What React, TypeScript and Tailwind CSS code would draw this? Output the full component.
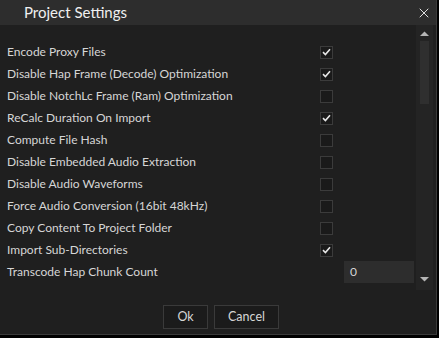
import { X } from "lucide-react";

const ROWS: ReadonlyArray<{ label: string; checked: boolean }> = [
  { label: "Encode Proxy Files", checked: true },
  { label: "Disable Hap Frame (Decode) Optimization", checked: true },
  { label: "Disable NotchLc Frame (Ram) Optimization", checked: false },
  { label: "ReCalc Duration On Import", checked: true },
  { label: "Compute File Hash", checked: false },
  { label: "Disable Embedded Audio Extraction", checked: false },
  { label: "Disable Audio Waveforms", checked: false },
  { label: "Force Audio Conversion (16bit 48kHz)", checked: false },
  { label: "Copy Content To Project Folder", checked: false },
  { label: "Import Sub-Directories", checked: true },
];

function Check({ checked }: { checked: boolean }) {
  return (
    <span className="flex h-[13px] w-[13px] items-center justify-center border border-[#3b3b3b] bg-[#1a1a1a]">
      {checked ? (
        <svg width="9" height="8" viewBox="0 0 9 8" fill="none">
          <path d="M1 4.2 L3.4 6.5 L8 1.2" stroke="#e6e6e6" strokeWidth="1.6" />
        </svg>
      ) : null}
    </span>
  );
}

export default function App() {
  return (
    <div
      className="h-[338px] w-[439px] bg-black"
      style={{ fontFamily: 'Lato, "Noto Sans", sans-serif' }}
    >
      <div className="flex h-[335px] w-[437px] flex-col border-r border-b border-[#3a3a3a] bg-[#1f1f1f]">
        {/* title bar */}
        <div className="flex h-[25px] shrink-0 items-center justify-between bg-[#2d2d2d] pl-[24px] pr-[4px]">
          <span className="text-[15px] leading-none text-[#f0f0f0]">Project Settings</span>
          <X size={16} strokeWidth={1.5} className="text-[#e0e0e0]" />
        </div>

        <div className="flex h-[265px] shrink-0">
          {/* settings list */}
          <div className="flex flex-1 flex-col pt-[16px]">
            {ROWS.map((row) => (
              <div key={row.label} className="flex h-[22px] items-center pl-[7px]">
                <span className="w-[313px] text-[12px] text-[#d6d6d6]">{row.label}</span>
                <Check checked={row.checked} />
              </div>
            ))}
            <div className="flex h-[22px] items-center pl-[7px]">
              <span className="w-[337px] text-[12px] text-[#d6d6d6]">Transcode Hap Chunk Count</span>
              <span className="flex h-[22px] w-[70px] items-center bg-[#2d2d2d] pl-[6px] text-[12px] text-[#d6d6d6]">
                0
              </span>
            </div>
          </div>

          {/* scrollbar */}
          <div className="mr-[3px] flex w-[17px] flex-col items-center bg-[#242424]">
            <svg width="9" height="6" viewBox="0 0 9 6" className="mt-[6px]">
              <path d="M0 5 L4.5 0.5 L9 5 Z" fill="#b5b5b5" />
            </svg>
            <div className="mt-[4px] h-[63px] w-[9px] bg-[#2f2f2f]" />
            <svg width="9" height="6" viewBox="0 0 9 6" className="mt-auto mb-[8px]">
              <path d="M0 1 L4.5 5.5 L9 1 Z" fill="#b5b5b5" />
            </svg>
          </div>
        </div>

        {/* buttons */}
        <div className="flex flex-1 items-start justify-center gap-[6px] pl-[6px] pt-[15px]">
          <button className="h-[24px] w-[45px] border border-[#3a3a3a] bg-[#1b1b1b] text-[12.5px] text-[#d6d6d6]">
            Ok
          </button>
          <button className="h-[24px] w-[65px] border border-[#3a3a3a] bg-[#1b1b1b] text-[12.5px] text-[#d6d6d6]">
            Cancel
          </button>
        </div>
      </div>
    </div>
  );
}
